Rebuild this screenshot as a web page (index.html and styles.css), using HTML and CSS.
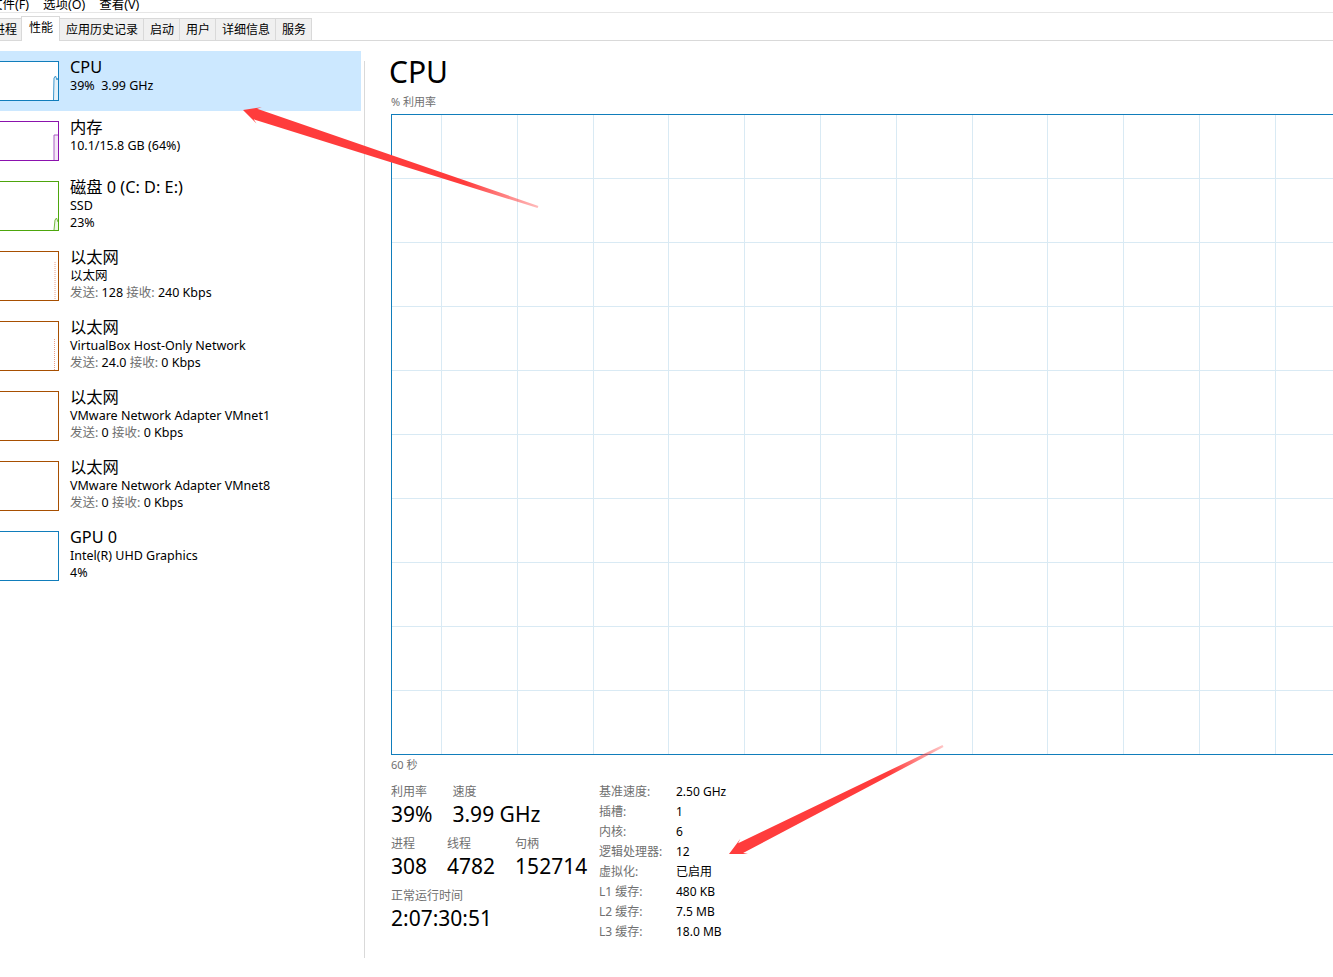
FILE: index.html
```html
<!DOCTYPE html>
<html lang="zh-CN">
<head>
<meta charset="utf-8">
<title>任务管理器 - 性能</title>
<link rel="stylesheet" href="styles.css">
</head>
<body>
<div class="menubar">
  <span>文件(F)</span>
  <span>选项(O)</span>
  <span>查看(V)</span>
</div>
<div class="tabbar">
  <div class="tab first">进程</div>
  <div class="tab active">性能</div>
  <div class="tab">应用历史记录</div>
  <div class="tab">启动</div>
  <div class="tab">用户</div>
  <div class="tab">详细信息</div>
  <div class="tab">服务</div>
</div>
<div class="content">
  <div class="sidebar">
    <div class="item selected">
      <div class="thumb cpu">
        <svg viewBox="0 0 60 38" width="60" height="38"><polygon class="fill" points="55.5,38 56,16 57.5,14 59,18 60,16 60,38"/><polyline points="55.5,38 56,16 57.5,14 59,18 60,16"/></svg>
      </div>
      <div class="info">
        <div class="title">CPU</div>
        <div class="sub">39%&nbsp; 3.99 GHz</div>
      </div>
    </div>
    <div class="item">
      <div class="thumb mem">
        <svg viewBox="0 0 60 38" width="60" height="38"><polygon class="fill" points="56,38 56,13 60,13 60,38"/><polyline points="56,38 56,13 60,13"/></svg>
      </div>
      <div class="info">
        <div class="title">内存</div>
        <div class="sub">10.1/15.8 GB (64%)</div>
      </div>
    </div>
    <div class="item tall">
      <div class="thumb disk">
        <svg viewBox="0 0 60 48" width="60" height="48"><polygon class="fill" points="56,48 57,38 58.5,36 60,40 60,48"/><polyline points="56,48 57,38 58.5,36 60,40"/></svg>
      </div>
      <div class="info">
        <div class="title">磁盘 0 (C: D: E:)</div>
        <div class="sub">SSD</div>
        <div class="sub">23%</div>
      </div>
    </div>
    <div class="item tall">
      <div class="thumb net">
        <svg viewBox="0 0 60 48" width="60" height="48"><line class="dots" x1="57" y1="10" x2="57" y2="48"/></svg>
      </div>
      <div class="info">
        <div class="title">以太网</div>
        <div class="sub">以太网</div>
        <div class="sub"><span class="dim">发送:</span> 128 <span class="dim">接收:</span> 240 Kbps</div>
      </div>
    </div>
    <div class="item tall">
      <div class="thumb net">
        <svg viewBox="0 0 60 48" width="60" height="48"><line class="dots" x1="56.5" y1="17" x2="56.5" y2="48"/></svg>
      </div>
      <div class="info">
        <div class="title">以太网</div>
        <div class="sub">VirtualBox Host-Only Network</div>
        <div class="sub"><span class="dim">发送:</span> 24.0 <span class="dim">接收:</span> 0 Kbps</div>
      </div>
    </div>
    <div class="item tall">
      <div class="thumb net"></div>
      <div class="info">
        <div class="title">以太网</div>
        <div class="sub">VMware Network Adapter VMnet1</div>
        <div class="sub"><span class="dim">发送:</span> 0 <span class="dim">接收:</span> 0 Kbps</div>
      </div>
    </div>
    <div class="item tall">
      <div class="thumb net"></div>
      <div class="info">
        <div class="title">以太网</div>
        <div class="sub">VMware Network Adapter VMnet8</div>
        <div class="sub"><span class="dim">发送:</span> 0 <span class="dim">接收:</span> 0 Kbps</div>
      </div>
    </div>
    <div class="item tall">
      <div class="thumb gpu"></div>
      <div class="info">
        <div class="title">GPU 0</div>
        <div class="sub">Intel(R) UHD Graphics</div>
        <div class="sub">4%</div>
      </div>
    </div>
  </div>
  <div class="divider"></div>
  <div class="main">
    <div class="cpu-title">CPU</div>
    <div class="axis-label">% 利用率</div>
    <div class="graph">
      <svg class="grid" width="988" height="639">
        <g>
          <line x1="49.5" y1="0" x2="49.5" y2="639"/>
          <line x1="125.5" y1="0" x2="125.5" y2="639"/>
          <line x1="201.5" y1="0" x2="201.5" y2="639"/>
          <line x1="276.5" y1="0" x2="276.5" y2="639"/>
          <line x1="352.5" y1="0" x2="352.5" y2="639"/>
          <line x1="428.5" y1="0" x2="428.5" y2="639"/>
          <line x1="504.5" y1="0" x2="504.5" y2="639"/>
          <line x1="580.5" y1="0" x2="580.5" y2="639"/>
          <line x1="655.5" y1="0" x2="655.5" y2="639"/>
          <line x1="731.5" y1="0" x2="731.5" y2="639"/>
          <line x1="807.5" y1="0" x2="807.5" y2="639"/>
          <line x1="883.5" y1="0" x2="883.5" y2="639"/>
          <line x1="959.5" y1="0" x2="959.5" y2="639"/>
          <line x1="0" y1="63.5" x2="988" y2="63.5"/>
          <line x1="0" y1="127.5" x2="988" y2="127.5"/>
          <line x1="0" y1="191.5" x2="988" y2="191.5"/>
          <line x1="0" y1="255.5" x2="988" y2="255.5"/>
          <line x1="0" y1="319.5" x2="988" y2="319.5"/>
          <line x1="0" y1="383.5" x2="988" y2="383.5"/>
          <line x1="0" y1="447.5" x2="988" y2="447.5"/>
          <line x1="0" y1="511.5" x2="988" y2="511.5"/>
          <line x1="0" y1="575.5" x2="988" y2="575.5"/>
        </g>
      </svg>
    </div>
    <div class="time-label">60 秒</div>
    <div class="stats">
      <div class="stats-left">
        <div class="stat-row">
          <div class="stat"><div class="lbl">利用率</div><div class="val">39%</div></div>
          <div class="stat"><div class="lbl">速度</div><div class="val">3.99 GHz</div></div>
        </div>
        <div class="stat-row">
          <div class="stat"><div class="lbl">进程</div><div class="val">308</div></div>
          <div class="stat"><div class="lbl">线程</div><div class="val">4782</div></div>
          <div class="stat"><div class="lbl">句柄</div><div class="val">152714</div></div>
        </div>
        <div class="stat-row">
          <div class="stat"><div class="lbl">正常运行时间</div><div class="val">2:07:30:51</div></div>
        </div>
      </div>
      <div class="stats-right">
        <div class="k">基准速度:</div><div class="v">2.50 GHz</div>
        <div class="k">插槽:</div><div class="v">1</div>
        <div class="k">内核:</div><div class="v">6</div>
        <div class="k">逻辑处理器:</div><div class="v">12</div>
        <div class="k">虚拟化:</div><div class="v">已启用</div>
        <div class="k">L1 缓存:</div><div class="v">480 KB</div>
        <div class="k">L2 缓存:</div><div class="v">7.5 MB</div>
        <div class="k">L3 缓存:</div><div class="v">18.0 MB</div>
      </div>
    </div>
  </div>
</div>
<svg class="annotations" width="1333" height="977" viewBox="0 0 1333 977">
  <defs>
    <linearGradient id="fade1" gradientUnits="userSpaceOnUse" x1="243" y1="110" x2="538" y2="207">
      <stop offset="0" stop-color="#ff3c3c"/>
      <stop offset="0.75" stop-color="#ff3c3c"/>
      <stop offset="1" stop-color="#ff3c3c" stop-opacity="0.35"/>
    </linearGradient>
    <linearGradient id="fade2" gradientUnits="userSpaceOnUse" x1="729" y1="854" x2="943" y2="746">
      <stop offset="0" stop-color="#ff3c3c"/>
      <stop offset="0.75" stop-color="#ff3c3c"/>
      <stop offset="1" stop-color="#ff3c3c" stop-opacity="0.3"/>
    </linearGradient>
  </defs>
  <polygon fill="url(#fade1)" points="243,110 261.8,107.2 257.1,108.8 538.4,205.9 537.6,208.1 253.6,119.3 256.5,123.4"/>
  <polygon fill="url(#fade2)" points="729,854 748,853.9 743.1,853.1 943.5,747.1 942.5,744.9 738.1,843.2 740.4,838.7"/>
</svg>
</body>
</html>
```
FILE: styles.css
```css
html, body {
  margin: 0;
  padding: 0;
}

body {
  position: relative;
  width: 1333px;
  height: 977px;
  overflow: hidden;
  background: #ffffff;
  color: #000000;
  font-family: "Noto Sans", "Noto Sans CJK SC", sans-serif;
  font-size: 12px;
}

/* ---------- menu bar ---------- */
.menubar {
  display: flex;
  height: 12px;
  margin-left: -17px;
  border-bottom: 1px solid #e6e6e6;
  overflow: hidden;
}

.menubar span {
  padding: 0 7px;
  margin-top: -1px;
  font-size: 12.5px;
  line-height: 12px;
}

/* ---------- tabs ---------- */
.tabbar {
  display: flex;
  align-items: flex-end;
  height: 24px;
  margin-top: 3px;
  margin-left: -14px;
  border-bottom: 1px solid #d9d9d9;
}

.tab {
  height: 21px;
  padding: 0 5px 0 6px;
  line-height: 21px;
  background: #f0f0f0;
  border-top: 1px solid #d9d9d9;
  border-right: 1px solid #d9d9d9;
  white-space: nowrap;
}

.tab.first {
  border-left: 1px solid #d9d9d9;
}

.tab.active {
  position: relative;
  z-index: 1;
  height: 24px;
  line-height: 21px;
  margin-left: -2px;
  margin-bottom: -1px;
  padding: 0 6px 0 7px;
  background: #ffffff;
  border-left: 1px solid #d9d9d9;
}

/* ---------- content ---------- */
.content {
  display: flex;
  height: 936px;
}

.sidebar {
  flex: none;
  width: 361px;
  padding-top: 10px;
}

.item {
  display: flex;
  height: 60px;
}

.item.tall {
  height: 70px;
}

.item.selected {
  background: #cce8ff;
}

.thumb {
  flex: none;
  box-sizing: border-box;
  width: 62px;
  height: 40px;
  margin-top: 10px;
  margin-left: -3px;
  background: #ffffff;
  border: 1px solid #117dbb;
  overflow: hidden;
}

.item.tall .thumb {
  height: 50px;
}

.thumb svg {
  display: block;
}

.thumb polyline {
  fill: none;
  stroke-width: 1;
}

.thumb.cpu, .thumb.gpu { border-color: #117dbb; }
.thumb.cpu polyline { stroke: #3d97cc; }
.thumb.cpu .fill { fill: #e4f1f9; }

.thumb.mem { border-color: #8b12ae; }
.thumb.mem polyline { stroke: #a95cc4; }
.thumb.mem .fill { fill: #f4e8f7; }

.thumb.disk { border-color: #4da60c; }
.thumb.disk polyline { stroke: #73b940; }
.thumb.disk .fill { fill: #eef7e7; }

.thumb.net { border-color: #a74f01; }
.thumb .dots {
  stroke: #e8a08c;
  stroke-width: 1;
  stroke-dasharray: 1 1;
}

.info {
  margin-left: 11px;
  padding-top: 6px;
  white-space: nowrap;
}

.title {
  font-size: 16.3px;
  line-height: 20px;
}

.sub {
  font-size: 12.5px;
  line-height: 17px;
}

.dim {
  color: #707070;
}

.divider {
  flex: none;
  width: 1px;
  height: 897px;
  margin-top: 20px;
  margin-left: 3px;
  background: #d9d9d9;
}

/* ---------- main pane ---------- */
.main {
  flex: 1;
  min-width: 0;
  padding-top: 13px;
  padding-left: 26px;
}

.cpu-title {
  margin-left: -2px;
  font-size: 30px;
  line-height: 36px;
}

.axis-label,
.time-label {
  font-size: 11px;
  line-height: 15px;
  color: #707070;
}

.axis-label {
  margin-top: 4px;
}

.graph {
  box-sizing: border-box;
  width: 990px;
  height: 641px;
  margin-top: 5px;
  border: 1px solid #117dbb;
}

.grid {
  display: block;
}

.grid line {
  stroke: #d9eaf4;
  stroke-width: 1;
  shape-rendering: crispEdges;
}

.time-label {
  margin-top: 2px;
}

.stats {
  display: flex;
  margin-top: 9px;
}

.stats-left {
  flex: none;
  width: 208px;
  padding-top: 3px;
}

.stat-row {
  display: flex;
  gap: 20px;
  margin-bottom: 8px;
}

.stat .lbl {
  font-size: 12px;
  line-height: 16px;
  color: #707070;
  white-space: nowrap;
}

.stat .val {
  font-size: 21px;
  line-height: 28px;
  white-space: nowrap;
}

.stats-right {
  display: grid;
  grid-template-columns: 77px auto;
  padding-top: 1px;
  font-size: 12px;
  line-height: 20px;
}

.stats-right .k {
  color: #707070;
  white-space: nowrap;
}

/* ---------- screenshot annotations ---------- */
.annotations {
  position: absolute;
  top: 0;
  left: 0;
  pointer-events: none;
}
```
